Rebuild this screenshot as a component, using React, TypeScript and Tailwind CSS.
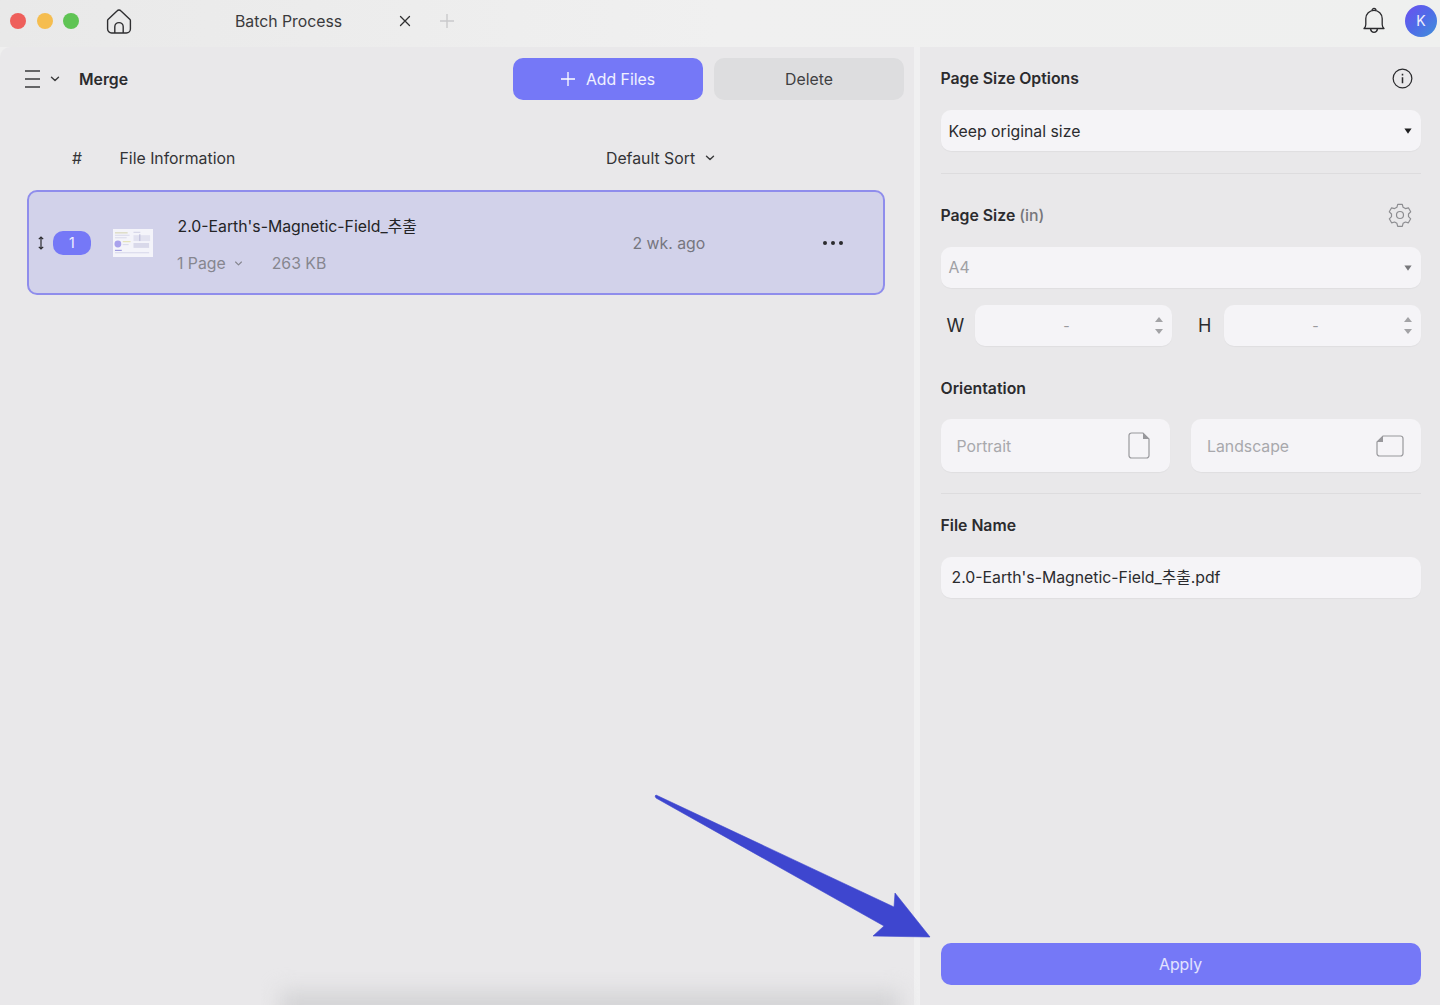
import React from "react";

const Chevron = ({ className = "", color = "#3a3a3c" }: { className?: string; color?: string }) => (
  <svg viewBox="0 0 10 6" className={className} fill="none" stroke={color} strokeWidth="1.4" strokeLinecap="round" strokeLinejoin="round">
    <path d="M1.5 1.2 5 4.6l3.5-3.4" />
  </svg>
);

const Caret = ({ color }: { color: string }) => (
  <svg viewBox="0 0 8 6" className="w-[8px] h-[6px]" fill={color}>
    <path d="M0.4 0.5h7.2L4 5.7z" />
  </svg>
);

const Stepper = () => (
  <div className="flex flex-col gap-[7px]">
    <svg viewBox="0 0 8 5" className="w-[8px] h-[5px]" fill="#a3a3a6"><path d="M4 0l4 5H0z" /></svg>
    <svg viewBox="0 0 8 5" className="w-[8px] h-[5px]" fill="#a3a3a6"><path d="M0 0h8L4 5z" /></svg>
  </div>
);

const Field = ({ children, className = "" }: { children: React.ReactNode; className?: string }) => (
  <div className={`bg-[#f5f4f7] rounded-[10px] shadow-[0_1px_1px_rgba(0,0,0,0.04)] flex items-center ${className}`}>{children}</div>
);

/* Text label centred one pixel lower than its box, as the original's font sits. */
const T = ({ children, className = "" }: { children: React.ReactNode; className?: string }) => (
  <span className={`block pt-[2px] ${className}`}>{children}</span>
);

const SizeInput = ({ label, labelClass }: { label: string; labelClass: string }) => (
  <div className="flex items-center">
    <span className={`text-[18px] text-[#2b2b2e] w-[34px] ${labelClass}`}>{label}</span>
    <Field className="w-[197px] h-[41px] pr-[9px] justify-end">
      <span className="flex-1 text-center text-[14px] text-[#9a9a9d] pl-[12px] pr-[8px]">-</span>
      <Stepper />
    </Field>
  </div>
);

export default function App() {
  return (
    <div className="relative w-[1440px] h-[1005px] overflow-hidden bg-[#efefef] text-[#2b2b2e] flex flex-col font-['Inter','Noto_Sans_CJK_KR',sans-serif] text-[15.8px] leading-[20px]">
      {/* Title bar */}
      <header className="h-[47px] shrink-0 flex items-center pb-[6px] bg-linear-to-r from-[#e9e9e9] via-[#f0f0f0] to-[#eff0ef]">
        <div className="flex items-center gap-[10.5px] pl-[10px]">
          <span className="w-[16px] h-[16px] rounded-full bg-[#ee5f5b]" />
          <span className="w-[16px] h-[16px] rounded-full bg-[#f5bd4f]" />
          <span className="w-[16px] h-[16px] rounded-full bg-[#5fc454]" />
        </div>
        <svg viewBox="0 0 26 26" className="w-[26px] h-[26px] ml-[27px]" fill="none" stroke="#2f2f31" strokeWidth="1.4" strokeLinejoin="round">
          <path d="M2 11.6 11 2.9a2.8 2.8 0 0 1 4 0l9 8.7c.3.3.4.6.4 1V21a4 4 0 0 1-4 4H5.600a4 4 0 0 1-4-4v-8.400c0-.4.1-.7.4-1z" />
          <path d="M8.800 25v-6.200a4.200 4.200 0 0 1 8.400 0V25" />
        </svg>
        <T className="ml-[103px] w-[164px] text-[#3a3a3c]">Batch Process</T>
        <svg viewBox="0 0 12 12" className="w-[12px] h-[12px]" stroke="#2f2f31" strokeWidth="1.3" strokeLinecap="round">
          <path d="M1.500 1.500l9 9M10.500 1.500l-9 9" />
        </svg>
        <svg viewBox="0 0 14 14" className="w-[14px] h-[14px] ml-[29px]" stroke="#c9c9cb" strokeWidth="1.4">
          <path d="M7 0v14M0 7h14" />
        </svg>
        <div className="ml-auto flex items-center gap-[20px] pr-[3px]">
          <svg viewBox="0 0 22 27" className="w-[22px] h-[27px]" fill="none" stroke="#2b2b2e" strokeWidth="1.300" strokeLinejoin="round">
            <path d="M1 21.500h20c-1.200-1-1.800-2-1.800-4v-6a8.200 8.200 0 0 0-16.400 0v6c0 2-.6 3-1.800 4z" />
            <path d="M9 3.500a2 2 0 0 1 4 0M7.500 22c.4 2 1.800 3.300 3.500 3.300S14.100 24 14.500 22" />
          </svg>
          <span className="w-[32px] h-[32px] rounded-full flex items-center justify-center text-white/90 text-[14px] bg-linear-to-br from-[#6a4df0] via-[#4f6be8] to-[#3f8fd8]">
            K
          </span>
        </div>
      </header>

      <main className="flex-1 flex min-h-0">
        {/* Left panel */}
        <section className="w-[914px] shrink-0 bg-[#e9e8ea] rounded-tl-[10px] flex flex-col">
          <div className="flex items-center h-[42px] mt-[11px] pl-[25px] pr-[10px]">
            <svg viewBox="0 0 15 18" className="w-[15px] h-[18px]" stroke="#3a3a3c" strokeWidth="1.400">
              <path d="M0 1h15M0 9h15M0 17h15" />
            </svg>
            <Chevron className="w-[10px] h-[6px] ml-[10px]" />
            <T className="ml-[19px] font-semibold text-[#2b2b2e]">Merge</T>
            <button className="ml-auto w-[190px] h-[42px] rounded-[10px] bg-[#7578f7] text-white/90 flex items-center justify-center gap-[11px]">
              <svg viewBox="0 0 14 14" className="w-[14px] h-[14px]" stroke="#fff" strokeWidth="1.300"><path d="M7 0v14M0 7h14" /></svg>
              <T>Add Files</T>
            </button>
            <button className="ml-[11px] w-[190px] h-[42px] rounded-[10px] bg-[#dddddf] text-[#3f3f42]"><T>Delete</T></button>
          </div>

          <div className="flex items-center h-[24px] mt-[46px] text-[#333336]">
            <T className="w-[119.500px] pl-[72px]">#</T>
            <T className="w-[486.500px]">File Information</T>
            <T>Default Sort</T>
            <Chevron className="w-[10px] h-[6px] ml-[10px]" />
          </div>

          <div className="mt-[20px] ml-[27px] w-[858px] h-[105px] rounded-[10px] border-2 border-[#8f8dec] bg-[#d2d2ea] flex items-center">
            <svg viewBox="0 0 8 14" className="w-[8px] h-[14px] ml-[8px]" fill="none" stroke="#2b2b2e" strokeWidth="1.200">
              <path d="M4 1v12M1.800 3.200 4 1l2.200 2.200M1.800 10.800 4 13l2.200-2.200" />
            </svg>
            <span className="ml-[8px] w-[37.500px] h-[24px] rounded-[10px] bg-[#7578f7] text-white/90 text-[14px] flex items-center justify-center">1</span>
            <div className="ml-[22px] w-[40px] h-[28px] bg-[#f4f4fa] blur-[0.4px]">
              <svg viewBox="0 0 41 28" className="w-full h-full">
                <rect x="2" y="3" width="13" height="1.200" fill="#d8d6b8" />
                <rect x="2" y="5.500" width="15" height="1.200" fill="#dcdcec" />
                <rect x="2" y="8" width="12" height="1.200" fill="#dcdcec" />
                <rect x="21" y="2.500" width="7" height="1" fill="#cfcfe4" />
                <rect x="21" y="6" width="17" height="6" fill="#e2e2f0" />
                <rect x="27" y="5" width="1" height="7" fill="#b9b9d6" />
                <circle cx="5" cy="15" r="3.500" fill="#a9a2ec" />
                <rect x="10" y="12" width="8" height="1.200" fill="#e4e2b8" />
                <rect x="10" y="15" width="6" height="1.200" fill="#dcdcec" />
                <rect x="21" y="14" width="16" height="5" fill="#d9d9ea" />
                <rect x="2" y="21" width="7" height="1" fill="#8d89d8" />
                <rect x="2" y="23.500" width="35" height="1" fill="#d7d7ea" />
              </svg>
            </div>
            <div className="ml-[25px] w-[455px] flex flex-col gap-[18px] mt-[4px]">
              <span className="leading-[19px] text-[#242426]">2.0-Earth's-Magnetic-Field_추출</span>
              <div className="flex items-center leading-[19px] text-[#86868f] -ml-[0.500px]">
                <span>1 Page</span>
                <Chevron className="w-[9px] h-[5px] ml-[8px]" color="#86868f" />
                <span className="ml-[29px]">263 KB</span>
              </div>
            </div>
            <T className="w-[190px] text-[#76767f]">2 wk. ago</T>
            <div className="flex gap-[4px]">
              <span className="w-[4px] h-[4px] rounded-full bg-[#2b2b2e]" />
              <span className="w-[4px] h-[4px] rounded-full bg-[#2b2b2e]" />
              <span className="w-[4px] h-[4px] rounded-full bg-[#2b2b2e]" />
            </div>
          </div>
        </section>

        <div className="w-[6px] shrink-0 bg-[#f0f0f1]" />

        {/* Right panel */}
        <aside className="flex-1 bg-[#e9e8ea] pl-[20.500px] pr-[19.500px] flex flex-col">
          <div className="flex items-center justify-between h-[24px] mt-[19px]">
            <T className="font-semibold text-[#2b2b2e]">Page Size Options</T>
            <svg viewBox="0 0 22 22" className="w-[21px] h-[21px] mr-[8px]" fill="none" stroke="#2b2b2e" strokeWidth="1.300">
              <circle cx="11" cy="11" r="9.800" />
              <path d="M11 9.800v6.200M11 6v1.800" strokeWidth="1.600" />
            </svg>
          </div>
          <Field className="h-[41px] mt-[20px] pl-[8px] pr-[9px] justify-between text-[#2b2b2e]">
            <T>Keep original size</T>
            <Caret color="#1f1f21" />
          </Field>
          <div className="h-px bg-[#dddcde] mt-[22px]" />
          <div className="flex items-center justify-between h-[24px] mt-[29px]">
            <T className="font-semibold text-[#2b2b2e]">
              Page Size <span className="font-medium text-[#77777b]">(in)</span>
            </T>
            <svg viewBox="0 0 26 26" className="w-[26px] h-[26px] mr-[8px]" fill="none" stroke="#8d8d91" strokeWidth="1.200" strokeLinejoin="round">
              <path d="M10.700 2.300h4.600l.8 3 2.300 1.300 3-.8 2.300 4-2.200 2.200v2.600l2.200 2.200-2.300 4-3-.8-2.300 1.300-.8 3h-4.600l-.8-3-2.300-1.300-3 .8-2.300-4 2.200-2.200v-2.600L2.300 9.800l2.300-4 3 .8 2.300-1.300z" />
              <circle cx="13" cy="13" r="3.500" />
            </svg>
          </div>
          <Field className="h-[41px] mt-[20px] pl-[8px] pr-[9px] justify-between text-[#a0a0a4]">
            A4
            <Caret color="#77777b" />
          </Field>
          <div className="flex justify-between mt-[17px]">
            <SizeInput label="W" labelClass="pl-[6px]" />
            <SizeInput label="H" labelClass="pl-[8.500px]" />
          </div>
          <div className="h-[24px] mt-[30px] flex items-center font-semibold text-[#2b2b2e]"><T>Orientation</T></div>
          <div className="flex justify-between mt-[19px]">
            <Field className="w-[229.500px] h-[53px] pl-[16px] pr-[20px] justify-between text-[#a8a8ac]">
              <T>Portrait</T>
              <svg viewBox="0 0 22 27" className="w-[22px] h-[27px]" fill="none">
                <path d="M3.500 1h11.500L21 7v16.500a2.500 2.500 0 0 1-2.500 2.500h-15A2.500 2.500 0 0 1 1 23.500v-20A2.500 2.500 0 0 1 3.500 1z" stroke="#98989c" strokeWidth="1.200" />
                <path d="M15 1l6 6h-6z" fill="#98989c" />
              </svg>
            </Field>
            <Field className="w-[229.500px] h-[53px] pl-[16px] pr-[17px] justify-between text-[#a8a8ac]">
              <T>Landscape</T>
              <svg viewBox="0 0 28 22" className="w-[28px] h-[22px]" fill="none">
                <path d="M7 1h17.500A2.500 2.500 0 0 1 27 3.500v15a2.500 2.500 0 0 1-2.500 2.500h-21A2.500 2.500 0 0 1 1 18.500V7z" stroke="#98989c" strokeWidth="1.200" />
                <path d="M7 1v6H1z" fill="#98989c" />
              </svg>
            </Field>
          </div>
          <div className="h-px bg-[#dddcde] mt-[21px]" />
          <div className="h-[24px] mt-[19px] flex items-center font-semibold text-[#2b2b2e]"><T>File Name</T></div>
          <Field className="h-[41px] mt-[20px] pl-[11px] text-[#2b2b2e]">2.0-Earth's-Magnetic-Field_추출.pdf</Field>
          <button className="mt-auto mb-[20px] h-[42px] rounded-[10px] bg-[#7578f7] text-white/80"><T>Apply</T></button>
        </aside>
      </main>

      {/* Bottom shading of the screenshot */}
      <div className="absolute left-[280px] -bottom-[16px] w-[620px] h-[30px] pointer-events-none bg-[#d4d4d6] blur-[10px]" />

      {/* Annotation arrow */}
      <svg className="absolute left-[650px] top-[790px] w-[290px] h-[155px] pointer-events-none" viewBox="0 0 290 155">
        <path d="M5 6 L6 8 L234 136 L223 146 L280 147 L245 103 L244 117 L6 5 Z" fill="#3e46cf" stroke="#3e46cf" strokeWidth="0.600" strokeLinejoin="round" />
      </svg>
    </div>
  );
}
